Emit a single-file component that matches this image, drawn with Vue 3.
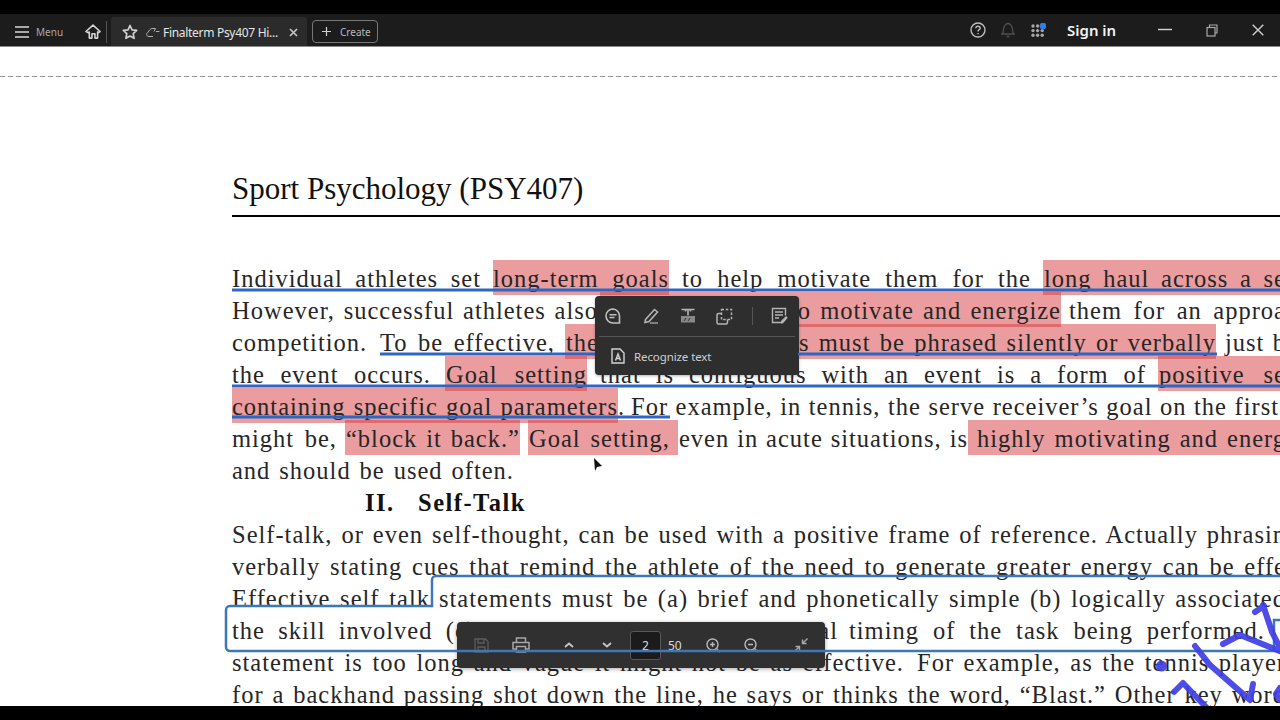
<script setup>
import { computed } from 'vue'

// [from x, to x, text, highlighted, left padding, right padding]
const rows = [
  [[232, 481, 'Individual athletes set'], [493, 669, 'long-term goals', true], [682, 1031, 'to help motivate them for the'], [1043, 1286, 'long haul across a se', true, 1]],
  [[232, 598, 'However, successful athletes also'], [600, 790, '', true], [790, 1061, 'to motivate and energize', true], [1069, 1286, 'them for an approa']],
  [[232, 370, 'competition.'], [380, 555, 'To be effective,'], [565, 762, 'the', true, 1], [762, 1216, 'cues must be phrased silently or verbally', true], [1225, 1286, 'just b']],
  [[232, 431, 'the event occurs.'], [445, 587, 'Goal setting', true, 1], [600, 1146, 'that is contiguous with an event is a form of'], [1158, 1286, 'positive se', true, 1]],
  [[232, 618, 'containing specific goal parameters', true], [618, 626, '.'], [631, 1279, 'For example, in tennis, the serve receiver’s goal on the first']],
  [[232, 337, 'might be,'], [345, 520, '“block it back.”', true, 1], [528, 678, 'Goal setting,', true, 1, 8], [679, 968, 'even in acute situations, is'], [968, 1286, 'highly motivating and energ', true, 9]],
  [[232, 514, 'and should be used often.']],
  [[365, 394, 'II.'], [418, 526, 'Self-Talk']],
  [[232, 1286, 'Self-talk, or even self-thought, can be used with a positive frame of reference. Actually phrasin']],
  [[232, 1286, 'verbally stating cues that remind the athlete of the need to generate greater energy can be effe']],
  [[232, 430, 'Effective self talk'], [439, 1286, 'statements must be (a) brief and phonetically simple (b) logically associated']],
  [[232, 476, 'the skill involved (c)'], [490, 838, 'compatible with the sequential'], [849, 1265, 'timing of the task being performed.']],
  [[232, 904, 'statement is too long and vague it might not be as effective.'], [917, 1286, 'For example, as the tennis player']],
  [[232, 1286, 'for a backhand passing shot down the line, he says or thinks the word, “Blast.” Other key word']],
]

const lines = computed(() =>
  rows.map((row, i) => {
    let prev = 232
    const segs = row.map(([from, to, text, hl, pad, padRight]) => {
      const style = {
        width: to - from + 'px',
        marginLeft: from - prev + 'px',
        paddingLeft: (pad || 0) + 'px',
        paddingRight: (padRight || 0) + 'px',
      }
      prev = to
      return { text, hl, style }
    })
    return { id: i, heading: i === 7, segs }
  })
)

const appDots = []
for (let r = 0; r < 3; r++) {
  for (let c = 0; c < 3; c++) appDots.push({ cx: 2 + c * 4.6, cy: 2 + r * 4.6 })
}
</script>

<template>
  <div class="screen">
    <div class="black-bar"></div>
    <header class="topbar">
      <button class="menu">
        <svg width="14" height="12" viewBox="0 0 14 12"><path d="M0 1h14M0 6h14M0 11h14" stroke="#a8a8a8" stroke-width="1.8" /></svg>
        <span>Menu</span>
      </button>
      <svg class="home" width="16" height="15" viewBox="0 0 18 17" fill="none" stroke="#d4d4d4" stroke-width="1.8" stroke-linejoin="round">
        <path d="M1 8.5 9 1.2l8 7.3-1.8 1.4-1-.9V16h-3v-5H7.800v5h-3V9l-1 .9z" />
      </svg>
      <div class="vdiv"></div>
      <div class="tab">
        <svg width="16" height="16" viewBox="0 0 16 16" fill="none" stroke="#cfcfcf" stroke-width="1.7" stroke-linejoin="round">
          <path d="M8 1.500l2 4.300 4.700.6-3.500 3.200.9 4.700L8 12l-4.100 2.300.9-4.700L1.300 6.400 6 5.800z" />
        </svg>
        <svg class="cloud" width="14" height="11" viewBox="0 0 14 11" fill="none" stroke="#b0b0b0" stroke-width="1">
          <path d="M7 9.500H3C1.400 9.500.6 8.400.6 7.300c0-1 .7-1.800 1.600-2C2.800 3.500 4.200 2 6 1.500h3.500L8 4.500M10 4.500h3.400" />
        </svg>
        <span class="tab-title">Finalterm Psy407 Hi...</span>
        <svg class="tab-close" width="9" height="9" viewBox="0 0 9 9"><path d="M1 1l7 7M8 1 1 8" stroke="#c4c4c4" stroke-width="1.700" /></svg>
      </div>
      <button class="create">
        <svg width="11" height="11" viewBox="0 0 11 11"><path d="M5.500 1v9M1 5.500h9" stroke="#d0d0d0" stroke-width="1.200" /></svg>
        <span>Create</span>
      </button>
      <div class="top-right">
        <svg width="16" height="16" viewBox="0 0 16 16" fill="none" stroke="#bdbdbd" stroke-width="1.400">
          <circle cx="8" cy="8" r="7" />
          <path d="M5.800 6.300C5.900 5 6.900 4.300 8 4.300c1.300 0 2.200.8 2.200 1.900 0 1.500-2.200 1.500-2.200 3.200" />
          <path d="M8 11v1.300" />
        </svg>
        <svg class="bell" width="14" height="16" viewBox="0 0 14 16" fill="none" stroke="#4e4e4e" stroke-width="1.300">
          <path d="M1 12c1.200-1 1.500-2 1.500-4.500S4.500 1.500 7 1.500s4.500 3.500 4.500 6S11.800 11 13 12zM5.500 14.500h3" />
        </svg>
        <svg class="apps" width="15" height="15" viewBox="0 0 15 15">
          <circle v-for="(d, i) in appDots" :key="i" :cx="d.cx" :cy="d.cy + 1" r="1.700" fill="#a6a6a6" />
          <circle cx="12" cy="3" r="3.300" fill="#2f7de6" />
        </svg>
        <span class="sign-in">Sign in</span>
        <div class="window-btns">
          <svg width="14" height="14" viewBox="0 0 14 14"><path d="M0 6.500h14" stroke="#d4d4d4" stroke-width="1.400" /></svg>
          <svg width="12" height="13" viewBox="0 0 12 13" fill="none" stroke="#a8a8a8" stroke-width="1.200">
            <rect x="1" y="3.500" width="8" height="8.500" />
            <path d="M3.500 3.500V1H11v8H9" />
          </svg>
          <svg width="12" height="12" viewBox="0 0 12 12"><path d="M.7.700l10.600 10.600M11.300.7.700 11.300" stroke="#cfcfcf" stroke-width="1.400" /></svg>
        </div>
      </div>
    </header>

    <main class="page">
      <div class="dash"></div>
      <div class="doc">
        <h1 class="title">Sport Psychology (PSY407)</h1>
        <div class="rule"></div>
        <div class="body">
          <div v-for="line in lines" :key="line.id" class="line" :class="{ heading: line.heading }">
            <span v-for="(s, i) in line.segs" :key="i" class="seg" :class="{ hl: s.hl }" :style="s.style">{{ s.text }}</span>
          </div>
        </div>
      </div>
    </main>

    <div class="black-bar"></div>

    <!-- selection popup -->
    <div class="popup">
      <div class="popup-tools">
        <svg width="18" height="18" viewBox="0 0 18 18" fill="none" stroke="#c0c0c0" stroke-width="1.600">
          <path d="M9 2a7 7 0 1 0 0 14h6.500V9A7 7 0 0 0 9 2z" />
          <path d="M5.500 7.800h7M5.500 10.500h5" />
        </svg>
        <svg width="18" height="18" viewBox="0 0 18 18" fill="none" stroke="#b4b4b4" stroke-width="1.600">
          <path d="M3.500 12.500 12.500 2.500l3 2.500-8.500 9.500-4 1z" />
          <path d="M8 16h8" stroke="#888" stroke-width="1.800" />
        </svg>
        <svg width="16" height="16" viewBox="0 0 16 16" fill="none" stroke="#b4b4b4" stroke-width="1.600">
          <path d="M1.500 1.500h13M8 1.500v6M5.500 1.500v2M10.500 1.500v2" />
          <path d="M1 8h14v6.500H1z" fill="#888" stroke="none" />
          <path d="M4 13l2-3M8 13l2-3" stroke="#333" stroke-width="1" />
        </svg>
        <svg width="17" height="17" viewBox="0 0 17 17" fill="none" stroke="#b4b4b4" stroke-width="1.500">
          <path d="M5.500 5.500H2.500a1.500 1.500 0 0 0-1.500 1.500v7.500A1.500 1.500 0 0 0 2.500 16H10a1.500 1.500 0 0 0 1.500-1.500v-3" />
          <rect x="5.500" y="1.500" width="10" height="10" stroke-dasharray="2.500 1.800" />
        </svg>
        <div class="popup-div"></div>
        <svg class="last" width="17" height="18" viewBox="0 0 17 18" fill="none" stroke="#b4b4b4" stroke-width="1.400">
          <path d="M10 15.500H1.500v-14h13v7" />
          <path d="M4 5h8M4 8h8M4 11h4" />
          <path d="M10 16.500v-2.500l5-5 1.800 1.800-5 5.700z" fill="#b4b4b4" stroke="none" />
        </svg>
      </div>
      <div class="popup-line"></div>
      <div class="popup-action">
        <svg width="14" height="16" viewBox="0 0 14 16" fill="none" stroke="#d4d4d4" stroke-width="1.400">
          <path d="M1 1h8l4 4v10H1z" />
          <path d="M4.500 12.500 7 6l2.500 6.500M5.500 10.500h3" />
        </svg>
        <span>Recognize text</span>
      </div>
    </div>

    <!-- page controls -->
    <div class="pager">
      <svg class="dim" width="15" height="15" viewBox="0 0 15 15" fill="none" stroke="#5c5c5c" stroke-width="1.300">
        <path d="M1 1h10.500L14 3.500V14H1zM4 1v4h6V1M4 14V9h7v5" />
      </svg>
      <svg class="print" width="18" height="16" viewBox="0 0 18 16" fill="none" stroke="#a6a6a6" stroke-width="1.500">
        <path d="M4.500 5V1h9v4M4.500 12H1V5.500h16V12h-3.500" />
        <rect x="4.500" y="9.500" width="9" height="5.500" />
      </svg>
      <svg class="up" width="10" height="6" viewBox="0 0 10 6" fill="none" stroke="#c4c4c4" stroke-width="1.900"><path d="M1 5l4-3.500L9 5" /></svg>
      <svg class="down" width="10" height="6" viewBox="0 0 10 6" fill="none" stroke="#c4c4c4" stroke-width="1.900"><path d="M1 1l4 3.500L9 1" /></svg>
      <div class="page-input">2</div>
      <span class="page-total">50</span>
      <svg class="zoom-in" width="15" height="15" viewBox="0 0 15 15" fill="none" stroke="#b8b8b8" stroke-width="1.400">
        <circle cx="6.500" cy="6.500" r="5.500" />
        <path d="M10.500 10.500 14 14M4 6.500h5M6.500 4v5" />
      </svg>
      <svg class="zoom-out" width="15" height="15" viewBox="0 0 15 15" fill="none" stroke="#b8b8b8" stroke-width="1.400">
        <circle cx="6.500" cy="6.500" r="5.500" />
        <path d="M10.500 10.500 14 14M4 6.500h5" />
      </svg>
      <svg class="collapse" width="14" height="14" viewBox="0 0 14 14" fill="none" stroke="#a8a8a8" stroke-width="1.400">
        <path d="M13.500.5 8.500 5.500M8.500 1.500v4h4M.5 13.500l5-5M1.500 8.500h4v4" />
      </svg>
    </div>

    <!-- annotations drawn on top of the page -->
    <svg class="marks" width="1280" height="706" viewBox="0 0 1280 706" fill="none">
      <g stroke="#2d66c4" stroke-width="3">
        <path d="M232 290H1280" />
        <path d="M380 354H595M798 354H1217" />
        <path d="M232 386H1280" />
        <path d="M232 417H670" />
      </g>
      <path d="M1280 576H436a4 4 0 0 0-4 4V606H230a4 4 0 0 0-4 4V647a4 4 0 0 0 4 4H1280" stroke="#3c78b8" stroke-width="2.500" />
      <path d="M1280 620H1274V650" stroke="#3c78b8" stroke-width="2.500" />
      <g class="ink" stroke="#3f3fe6" stroke-width="6" stroke-linecap="round" stroke-linejoin="round">
        <path d="M1255 612 1264 606" />
        <path d="M1263 605 1272 632 1282 652" />
        <path d="M1223 644 1240 635 1282 652" />
        <path d="M1195 646 1210 665 1250 700 1253 684" />
        <path d="M1174 692 1183 683 1207 708" />
        <path d="M1280 688 1276 694 1280 700" />
      </g>
      <circle class="ink" cx="1161.500" cy="666" r="5.500" fill="#3f3fe6" />
      <path d="M594 458 602 466 597 467 595 471z" fill="#111" />
    </svg>
  </div>
</template>

<style scoped>
.screen {
  position: relative;
  width: 1280px;
  height: 720px;
  display: flex;
  flex-direction: column;
  overflow: hidden;
  background: #000;
  font-family: "Noto Sans", "Open Sans", sans-serif;
}
.black-bar {
  height: 14px;
  flex: none;
  background: #000;
}
.topbar {
  height: 32px;
  flex: none;
  display: flex;
  align-items: center;
  background: #1c1c1c;
  border-bottom: 1px solid #8a8a8a;
  box-sizing: content-box;
  color: #ccc;
}
button {
  background: none;
  border: 0;
  padding: 0;
  font-family: inherit;
  color: inherit;
}
.menu {
  display: flex;
  align-items: center;
  gap: 7px;
  margin: 3px 0 0 15px;
  font-size: 10px;
  color: #aaa;
}
.menu span {
  width: 26px;
  white-space: nowrap;
}
.home {
  margin: 3px 0 0 23px;
}
.vdiv {
  width: 1px;
  height: 22px;
  margin: 3px 0 0 5px;
  background: #555;
}
.tab {
  width: 196px;
  height: 29px;
  margin-left: 4px;
  align-self: flex-end;
  display: flex;
  align-items: center;
  padding: 1px 0 0 11px;
  box-sizing: border-box;
  background: #2b2b2b;
  border-radius: 3px 3px 0 0;
}
.cloud {
  margin-left: 8px;
}
.tab-title {
  margin-left: 3px;
  width: 110px;
  font-size: 12px;
  letter-spacing: -0.3px;
  color: #e6e6e6;
  white-space: nowrap;
}
.tab-close {
  margin-left: 16px;
}
.create {
  width: 66px;
  height: 23px;
  margin: 3px 0 0 5px;
  display: flex;
  align-items: center;
  gap: 8px;
  padding-left: 8px;
  box-sizing: border-box;
  border: 1px solid #777;
  border-radius: 4px;
  font-size: 10px;
  color: #b8b8b8;
}
.top-right {
  margin-left: auto;
  display: flex;
  align-items: center;
}
.bell {
  margin-left: 15px;
}
.apps {
  margin-left: 16px;
}
.sign-in {
  margin-left: 21px;
  width: 50px;
  font-size: 15px;
  font-weight: 600;
  color: #f2f2f2;
  white-space: nowrap;
}
.window-btns {
  display: flex;
  align-items: center;
  gap: 34px;
  margin-left: 41px;
  margin-right: 16px;
}
.page {
  flex: 1;
  min-height: 0;
  overflow: hidden;
  background: #fff;
  padding-top: 29px;
}
.dash {
  height: 1px;
  background: repeating-linear-gradient(90deg, #999 0 5px, transparent 5px 8px);
}
.doc {
  padding: 95px 0 0 232px;
  font-family: "Liberation Serif", "Times New Roman", serif;
  color: #262626;
}
.title {
  margin: 0;
  padding-top: 1px;
  font-size: 31px;
  font-weight: 400;
  line-height: 32px;
  color: #111;
  white-space: nowrap;
}
.rule {
  height: 2px;
  margin-top: 10px;
  background: #000;
}
.body {
  margin-top: 45px;
}
.line {
  display: flex;
  height: 32px;
  font-size: 24.5px;
  line-height: 32px;
  letter-spacing: 1px;
}
.heading {
  font-weight: 700;
  color: #111;
  letter-spacing: 1.500px;
}
.seg {
  flex: none;
  box-sizing: border-box;
  height: 32px;
  padding-top: 1px;
  white-space: nowrap;
  text-align: justify;
  text-align-last: justify;
}
.hl {
  height: 35px;
  margin-top: -2px;
  padding-top: 3px;
  background: rgba(214, 58, 64, 0.5);
}
.popup {
  position: absolute;
  left: 595px;
  top: 296px;
  width: 204px;
  height: 79px;
  box-sizing: border-box;
  background: #2e2e2e;
  border-radius: 4px;
  box-shadow: 0 1px 3px rgba(0, 0, 0, 0.3);
}
.popup-tools {
  height: 40px;
  display: flex;
  align-items: center;
  gap: 20px;
  padding-left: 9px;
}
.popup-div {
  width: 1px;
  height: 18px;
  background: #555;
  margin-left: -1px;
}
.popup-tools .last {
  margin-left: -2px;
}
.popup-line {
  height: 1px;
  margin: 0 4px;
  background: #555;
}
.popup-action {
  height: 38px;
  display: flex;
  align-items: center;
  gap: 9px;
  padding-left: 16px;
  font-size: 11.500px;
  letter-spacing: -0.1px;
  color: #cfcfcf;
}
.pager {
  position: absolute;
  left: 457px;
  top: 622px;
  width: 368px;
  height: 46px;
  display: flex;
  align-items: center;
  box-sizing: border-box;
  background: #303030;
  border-radius: 4px;
  box-shadow: 0 1px 4px rgba(0, 0, 0, 0.35);
  color: #ddd;
  font-size: 12px;
}
.pager .dim {
  margin-left: 17px;
}
.print {
  margin-left: 23px;
}
.up {
  margin-left: 34px;
}
.down {
  margin-left: 28px;
}
.page-input {
  width: 31px;
  height: 29px;
  margin-left: 18px;
  box-sizing: border-box;
  border: 1px solid #585858;
  border-radius: 3px;
  background: #1b1b1b;
  line-height: 27px;
  text-align: center;
}
.page-total {
  margin-left: 7px;
  width: 16px;
}
.zoom-in {
  margin-left: 22px;
}
.zoom-out {
  margin-left: 23px;
}
.collapse {
  margin-left: 35px;
}
.marks {
  position: absolute;
  left: 0;
  top: 0;
  pointer-events: none;
}
.ink {
  opacity: 0.92;
  filter: blur(0.5px);
}
</style>
